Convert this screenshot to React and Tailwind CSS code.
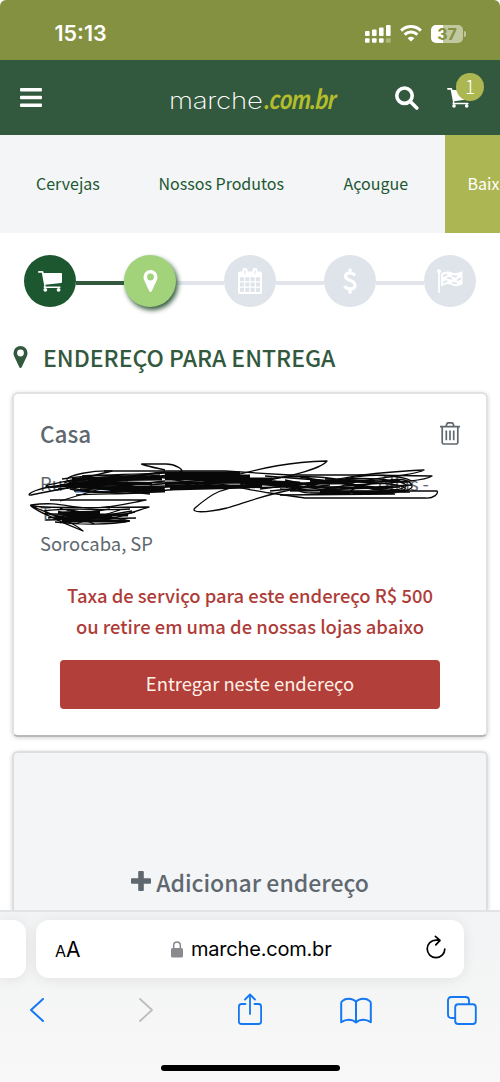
import { FaBars } from 'react-icons/fa'

const navLinks = [
  { label: 'Cervejas', className: 'ml-[36px] w-[122.5px]' },
  { label: 'Nossos Produtos', className: 'w-[185px]' },
  { label: 'Açougue', className: 'w-[101px]' },
]

function CartIcon({ className }) {
  return (
    <svg viewBox="0 0 24 21" className={className} fill="currentColor">
      <path d="M0.8 0H4.4Q5.2 0 5.4 .8L5.7 2H23.2Q24 2 24 2.8V11Q24 11.8 23.2 11.9L7.4 13.8L7.7 15.4H21.8Q22.6 15.4 22.6 16.2T21.8 17H6.4Q5.3 17 5.8 15.8L6.2 14.6L3.8 1.8H.8Q0 1.8 0 .9T.8 0Z" />
      <circle cx="7.3" cy="18.8" r="1.9" />
      <circle cx="20.6" cy="18.8" r="1.9" />
    </svg>
  )
}

function PinIcon({ className }) {
  return (
    <svg viewBox="0 0 14 22" className={className} fill="currentColor">
      <path fillRule="evenodd" d="M7 0A7 7 0 0 1 14 7Q14 8.8 13.3 10.2L8.3 21Q7.9 22 7 22T5.7 21L.7 10.2Q0 8.8 0 7A7 7 0 0 1 7 0ZM7 3.6A3.4 3.4 0 1 0 7 10.4A3.4 3.4 0 1 0 7 3.6Z" />
    </svg>
  )
}

function CalendarIcon() {
  return (
    <svg viewBox="0 0 24 26" className="h-[26px] w-6" fill="currentColor">
      <rect y="3.5" width="24" height="22.5" rx="1.8" />
      <rect x="4.5" y="0" width="5" height="8" rx="2" />
      <rect x="14.5" y="0" width="5" height="8" rx="2" />
      <g className="text-[#dfe4eb]">
        <path d="M6.5 2h1v4.3h-1zM16.5 2h1v4.3h-1z" />
        <path d="M2 9.2h4.1v4H2zM7.3 9.2h4.1v4H7.3zM12.6 9.2h4.1v4h-4.1zM17.9 9.2H22v4h-4.1zM2 14.4h4.1v4.2H2zM7.3 14.4h4.1v4.2H7.3zM12.6 14.4h4.1v4.2h-4.1zM17.9 14.4H22v4.2h-4.1zM2 19.8h4.1V24H2zM7.3 19.8h4.1V24H7.3zM12.6 19.8h4.1V24h-4.1zM17.9 19.8H22V24h-4.1z" />
      </g>
    </svg>
  )
}

function DollarIcon() {
  return (
    <svg viewBox="0 0 14 26" className="h-[26px] w-[14px]" fill="none" stroke="currentColor" strokeWidth="3.2">
      <path d="M12.2 7.2Q9.8 5 6.9 5Q2.6 5 2.6 8.3Q2.6 10.8 6.8 12.3Q12 14 12 17.2Q12 20.9 7.2 20.9Q4 20.9 1.3 18.3" />
      <path d="M7 .5V5M7 21V25.5" />
    </svg>
  )
}

function FlagIcon() {
  return (
    <svg viewBox="0 0 26 24" className="h-6 w-[26px]" fill="currentColor">
      <circle cx="2" cy="2.2" r="2" />
      <rect x="1.2" y="2" width="1.7" height="22" rx=".8" />
      <path d="M4 4.4Q9.5 1 15 3.4Q19 5 24.5 2.4Q25.5 2 25.5 3.2V14.6Q25.5 15.4 24.7 15.8Q19 18.6 14.5 16Q10 13.8 5 17Q4 17.5 4 16.4Z" />
      <path className="text-[#dfe4eb]" d="M5.8 6.2Q8 4.9 10.3 4.6V6.6Q8 7 5.8 8.4zM10.3 7.8Q13 7.8 15 9V10.8Q12.6 9.8 10.3 9.9zM5.8 12.8Q8 11.4 10.3 11.2V13.2Q8 13.4 5.8 14.6zM15.2 5.8Q18 7 20 6.4V8.2Q17.6 8.9 15.2 7.8zM20 10Q22 9.6 24 8.6V10.8Q22 11.8 20 12zM15.2 12.6Q17.6 13.8 20 13.4V15.2Q17.4 15.6 15.2 14.6z" />
    </svg>
  )
}

function StatusBar() {
  return (
    <div className="flex h-[60px] shrink-0 items-center justify-between bg-[#839140] pt-[7px] pr-[34px] pl-[54.5px] text-white">
      <span className="font-[Inter] text-[21.5px] font-semibold">15:13</span>
      <div className="flex items-center">
        <svg viewBox="0 0 26 18" className="mr-[9px] h-[18px] w-[26px]" fill="currentColor">
          <rect x="0" y="6" width="4.6" height="5" rx="1" />
          <rect x="7" y="4.4" width="4.6" height="6.6" rx="1" />
          <rect x="14" y="2.6" width="4.6" height="8.4" rx="1" />
          <rect x="21" y="0" width="4.6" height="11" rx="1" />
          <rect x="0" y="13.2" width="4.6" height="4.6" rx="1" />
          <rect x="7" y="13.2" width="4.6" height="4.6" rx="1" />
          <rect x="14" y="13.2" width="4.6" height="4.6" rx="1" />
          <rect x="21" y="13.2" width="4.6" height="4.6" rx="1" opacity=".35" />
        </svg>
        <svg viewBox="0 0 22 17" className="mr-[9px] h-[17px] w-[22px]" fill="none" stroke="currentColor" strokeWidth="3">
          <path d="M1.1 5.6Q5.5 1.6 11 1.6T20.9 5.6" />
          <path d="M4.6 9.6Q7.5 7 11 7T17.4 9.6" />
          <path d="M11 16.6L7.6 13.2Q11 10.4 14.4 13.2Z" fill="currentColor" stroke="none" />
        </svg>
        <div className="flex h-[18px] w-8 items-center justify-center rounded-[5px] bg-linear-to-r from-white from-37% to-[#c1c89f] to-37%">
          <span className="font-[Inter] text-[16px] font-bold text-[#839140]">37</span>
        </div>
        <div className="ml-px h-[6px] w-[2px] rounded-r-full bg-[#c1c89f]" />
      </div>
    </div>
  )
}

function Header() {
  return (
    <header className="flex h-[75px] shrink-0 items-center bg-[#32593d] text-white">
      <FaBars className="ml-[20px] h-[25px] w-[22px]" />
      <div className="ml-[127px] flex w-[170px] items-baseline pt-[3px]">
        <span className="w-[96px] shrink-0">
          <span className="inline-block origin-left scale-x-[1.2] font-[Inter] text-[23px] leading-[30px] font-extralight tracking-[-0.2px]">marche</span>
        </span>
        <span className="shrink-0 origin-left scale-x-[.85] -skew-x-6 font-[Lato] text-[28px] leading-[30px] font-bold tracking-[-0.5px] text-[#b4bd2c] italic">.com.br</span>
      </div>
      <svg viewBox="0 0 24 24" className="ml-[56px] size-6" fill="none" stroke="currentColor" strokeWidth="3.6">
        <circle cx="9.5" cy="9.7" r="7.7" />
        <path d="M15 15.2L21.8 22" strokeLinecap="round" />
      </svg>
      <div className="relative ml-[28px]">
        <CartIcon className="h-5 w-[23px]" />
        <span className="absolute -top-[15px] left-[9px] flex size-7 items-center justify-center rounded-full bg-[#acb752] pb-0.5 text-[19px] leading-none font-light">1</span>
      </div>
    </header>
  )
}

function Step({ children, className }) {
  return (
    <div className={`flex size-[52px] shrink-0 items-center justify-center rounded-full text-white ${className}`}>
      {children}
    </div>
  )
}

function Steps() {
  return (
    <div className="flex h-[93px] shrink-0 items-center px-6 pt-[3px]">
      <Step className="bg-[#1c5730]"><CartIcon className="h-[21px] w-6" /></Step>
      <div className="mt-[3px] h-1 w-12 bg-[#32593d]" />
      <Step className="z-10 bg-[#a2d279] shadow-[2px_3px_5px_#32593d]"><PinIcon className="h-[22px] w-[15px]" /></Step>
      <div className="mt-[3px] h-1 w-12 bg-[#e1e5eb]" />
      <Step className="bg-[#dfe4eb]"><CalendarIcon /></Step>
      <div className="mt-[3px] h-1 w-12 bg-[#e1e5eb]" />
      <Step className="bg-[#dfe4eb]"><DollarIcon /></Step>
      <div className="mt-[3px] h-1 w-12 bg-[#e1e5eb]" />
      <Step className="bg-[#dfe4eb]"><FlagIcon /></Step>
    </div>
  )
}

// pen strokes that hide the street lines of the address
function Scribble() {
  return (
    <svg viewBox="0 0 500 90" className="pointer-events-none absolute top-[61px] -left-[14px] h-[90px] w-[500px]" fill="none" stroke="#080808" strokeWidth="1.3" strokeLinejoin="round">
      <path d="M75 37L150 36" stroke="#7fa6dc" strokeWidth="2" />
      <path d="M165 15Q138 9 142 9L166 9C176 9 183 15 182 16Q176 20 140 23C100 27 60 34 48 32S80 25 112 16C95 15 66 20 67 25C68 29 150 18 165 17C120 24 50 36 31 40C24 41 36 31 70 30C110 28 130 24 165 21" />
      <path d="M104 16H225L290 20H360L432 21C420 29 350 28 330 33S400 40 405 34S340 24 300 30C260 36 200 30 170 24S90 22 72 27S90 39 130 36S220 22 260 27" />
      <path d="M150 30L225 23C265 12 290 7 327 6C320 15 285 22 255 28S218 33 195 53C190 58 205 58 227 53C250 46 270 38 300 33S330 20 424 15C412 22 360 23 345 30S305 37 280 34" />
      <path d="M60 46L100 34C130 37 165 38 190 31S240 34 270 38L305 43H425C434 44 439 38 437 36L330 36C300 31 270 26 240 28" />
      <path d="M64 28C85 20 130 24 165 22M70 34C90 39 120 38 150 34M82 21C110 18 130 24 160 20M55 32C90 24 120 34 165 31M74 36L165 26M66 30L150 39M90 22L140 34M80 33L165 35" />
      <path d="M62 24C100 18 140 20 165 18M60 30L120 22M75 26L165 28M58 34C90 30 120 30 165 33M76 40C100 38 130 40 165 36" />
      <path d="M88 25L162 24M72 28L152 29M90 33H164M66 32L128 28M72 24L140 22M110 36H165" strokeWidth="2.8" />
      <path d="M165 18H240M165 21L250 21M165 24L272 24M165 28L276 27M165 31L262 31M170 34L250 32M168 22L290 31M220 25L300 28" strokeWidth="2.8" />
      <path d="M240 30C280 18 330 20 350 28S395 38 405 32S360 19 322 27S290 40 350 38M255 24C290 37 330 39 365 30S410 24 412 31S370 42 330 35M270 30L370 26M290 36L400 32M300 22L390 36M285 25L350 38M310 38L410 37M325 24L408 27M350 36C380 22 400 24 404 29M260 34L340 24M280 40L395 39" />
      <path d="M265 21L330 26M270 36L330 30M345 24C370 18 400 20 412 26M340 34L412 30M350 29L405 36" />
      <path d="M275 29L350 28M290 32L385 33M310 26L375 26M320 37H390" strokeWidth="2.4" />
      <path d="M50 45H146C130 48 112 53 90 53S60 46 31 50C27 51 58 66 83 76C70 65 48 58 31 51C60 54 110 52 149 52C135 56 125 61 110 64S60 62 45 58" />
      <path d="M44 56C70 52 100 56 130 54M46 65L136 63M55 67C80 70 110 70 130 66M60 53C80 60 110 64 135 57M48 63L110 54M60 68L132 56M70 55L130 66M50 59L125 60M75 69L120 55M58 56L95 69" />
      <path d="M58 58L100 57M55 63L112 62M62 66L126 66M92 60L128 60M66 60H110" strokeWidth="2.8" />
    </svg>
  )
}

function AddressCard() {
  return (
    <section className="relative mx-3 h-[345px] shrink-0 rounded-md border-2 border-[#e0e1e3] border-b-[#b7b9bc] bg-white px-[26px] pt-[23px] text-[#60686f] shadow-[0_1px_4px_rgba(0,0,0,0.18)]">
      <div className="flex items-center justify-between">
        <h3 className="text-[22.5px] leading-[32px] font-medium">Casa</h3>
        <svg viewBox="0 0 20 23" className="h-[23px] w-5" fill="none" stroke="currentColor" strokeWidth="1.7">
          <path d="M0 4.6H20M2.2 4.6V20.4Q2.2 22 3.8 22H16.2Q17.8 22 17.8 20.4V4.6M6 4.6L7 1.6Q7.3 .8 8 .8H12Q12.7 .8 13 1.6L14 4.6M6.3 8.5V18.3M10 8.5V18.3M13.7 8.5V18.3" />
        </svg>
      </div>
      <div className="mt-[19px] text-[18.4px] leading-[30px] whitespace-nowrap">
        <p className="flex w-[389px] justify-between"><span>Ru</span><span>ólias -</span></p>
        <p>T</p>
        <p>Sorocaba, SP</p>
      </div>
      <Scribble />
      <p className="mt-[22px] text-center text-[18.4px] leading-[30.5px] font-medium whitespace-nowrap text-[#ae3c38]">
        Taxa de serviço para este endereço R$ 500
        <br />
        ou retire em uma de nossas lojas abaixo
      </p>
      <button className="mt-[19px] ml-5 h-[49px] w-[380px] rounded bg-[#b23f39] pb-0.5 text-[18.4px] text-[#fff1e8]">
        Entregar neste endereço
      </button>
    </section>
  )
}

function BrowserBar() {
  return (
    <footer className="h-[172px] shrink-0 overflow-hidden border-t-2 border-[#e2e3e5] bg-linear-to-b from-[#f2f3f4] to-[#f8f8f8]">
      <div className="mt-[8px] flex gap-[10px]">
        <div className="h-[58px] w-[26px] rounded-r-[13px] bg-white shadow-[0_2px_14px_rgba(0,0,0,0.08)]" />
        <div className="flex h-[58px] w-[428px] items-center rounded-[13px] bg-white font-[Inter] text-black shadow-[0_2px_14px_rgba(0,0,0,0.08)]">
          <span className="ml-[19px] w-[27px] pt-0.5 text-[16px] whitespace-nowrap">A<span className="text-[21px]">A</span></span>
          <svg viewBox="0 0 12 17" className="ml-[89px] h-[17px] w-3">
            <path d="M2.7 8V4.3A3.3 3.3 0 0 1 9.3 4.3V8" fill="none" stroke="#8a8a8e" strokeWidth="1.5" />
            <rect y="7" width="12" height="9.5" rx="1.6" fill="#8a8a8e" />
          </svg>
          <span className="ml-[8px] w-[142px] text-[20px] tracking-[-0.2px]">marche.com.br</span>
          <svg viewBox="0 0 20 24" className="-mt-1 ml-[93px] h-6 w-5" fill="none" stroke="currentColor" strokeWidth="1.7" strokeLinecap="round" strokeLinejoin="round">
            <path d="M12.5 5.1H10A8.8 8.8 0 1 0 18.8 14M9.4 1.3L14 5.4L9.8 9.9" />
          </svg>
        </div>
      </div>
      <div className="mt-[13px] flex h-[38px] items-center text-[#1478f2]">
        <svg viewBox="0 0 14 24" className="ml-[30px] h-6 w-[14px]" fill="none" stroke="currentColor" strokeWidth="2" strokeLinecap="round" strokeLinejoin="round"><path d="M13 1L1 12L13 23" /></svg>
        <svg viewBox="0 0 14 24" className="ml-[95px] h-6 w-[14px] text-[#bcbcbe]" fill="none" stroke="currentColor" strokeWidth="1.8" strokeLinecap="round" strokeLinejoin="round"><path d="M1 1L13 12L1 23" /></svg>
        <svg viewBox="0 0 24 32" className="-mt-0.5 ml-[85px] h-8 w-6" fill="none" stroke="currentColor" strokeWidth="1.8" strokeLinecap="round" strokeLinejoin="round">
          <path d="M7.5 11H3.5Q.9 11 .9 13.5V28.5Q.9 31 3.5 31H20.5Q23.1 31 23.1 28.5V13.5Q23.1 11 20.5 11H16.5M12 21V1.5M7 6.5L12 1.5L17 6.5" />
        </svg>
        <svg viewBox="0 0 32 27" className="ml-[78px] h-[27px] w-8" fill="none" stroke="currentColor" strokeWidth="2" strokeLinejoin="round">
          <path d="M16 25.5Q13 22.8 8.5 22.8Q5 22.8 1.2 25.2V6Q1.2 4.8 2.3 4Q5 1.8 8.5 1.8Q13.5 1.8 16 5Q18.5 1.8 23.5 1.8Q27 1.8 29.7 4Q30.8 4.8 30.8 6V25.2Q27 22.8 23.5 22.8Q19 22.8 16 25.5ZM16 5V25" />
        </svg>
        <svg viewBox="0 0 30 29" className="ml-[75px] h-[29px] w-[30px]" fill="none" stroke="currentColor" strokeWidth="1.9">
          <rect x="8.2" y="8.2" width="20.6" height="19.8" rx="3" />
          <path d="M8 22H4.5Q1 22 1 18.5V4.5Q1 1 4.5 1H18.5Q22 1 22 4.5V8" />
        </svg>
      </div>
      <div className="mx-auto mt-[36px] h-[6px] w-[179px] rounded-full bg-black" />
    </footer>
  )
}

export default function App() {
  return (
    <div className="flex h-[1082px] w-[500px] flex-col overflow-hidden bg-white font-['Noto_Sans_CJK_SC',sans-serif]">
      <div className="overflow-hidden rounded-t-md"><StatusBar /></div>
      <Header />
      <nav className="flex h-[98px] shrink-0 items-center overflow-hidden bg-[#f3f5f7] text-[16px] whitespace-nowrap text-[#1c5730]">
        {navLinks.map((link) => (
          <a key={link.label} className={`shrink-0 pb-0.5 ${link.className}`}>{link.label}</a>
        ))}
        <a className="flex h-full w-[56px] shrink-0 items-center bg-[#acb653] pb-0.5 pl-[23px] text-white">Baix</a>
      </nav>
      <Steps />
      <h2 className="flex h-[66px] shrink-0 items-center pb-1 pl-[13px] text-[23px] font-medium whitespace-nowrap text-[#32593d]">
        <PinIcon className="mr-[15px] h-[22px] w-[15px]" />
        ENDEREÇO PARA ENTREGA
      </h2>
      <AddressCard />
      <section className="mx-3 mt-[14px] min-h-0 grow rounded-t-md border-2 border-b-0 border-[#dcdee0] bg-[#f3f5f7] shadow-[0_1px_4px_rgba(0,0,0,0.18)]">
        <div className="mt-[112px] flex items-center justify-center text-[23px] font-medium text-[#60686f]">
          <svg viewBox="0 0 20 20" className="mr-[5px] mb-0.5 size-5" fill="currentColor">
            <rect x="7.2" width="5.6" height="20" rx="1" />
            <rect y="7.2" width="20" height="5.6" rx="1" />
          </svg>
          Adicionar endereço
        </div>
      </section>
      <BrowserBar />
    </div>
  )
}
